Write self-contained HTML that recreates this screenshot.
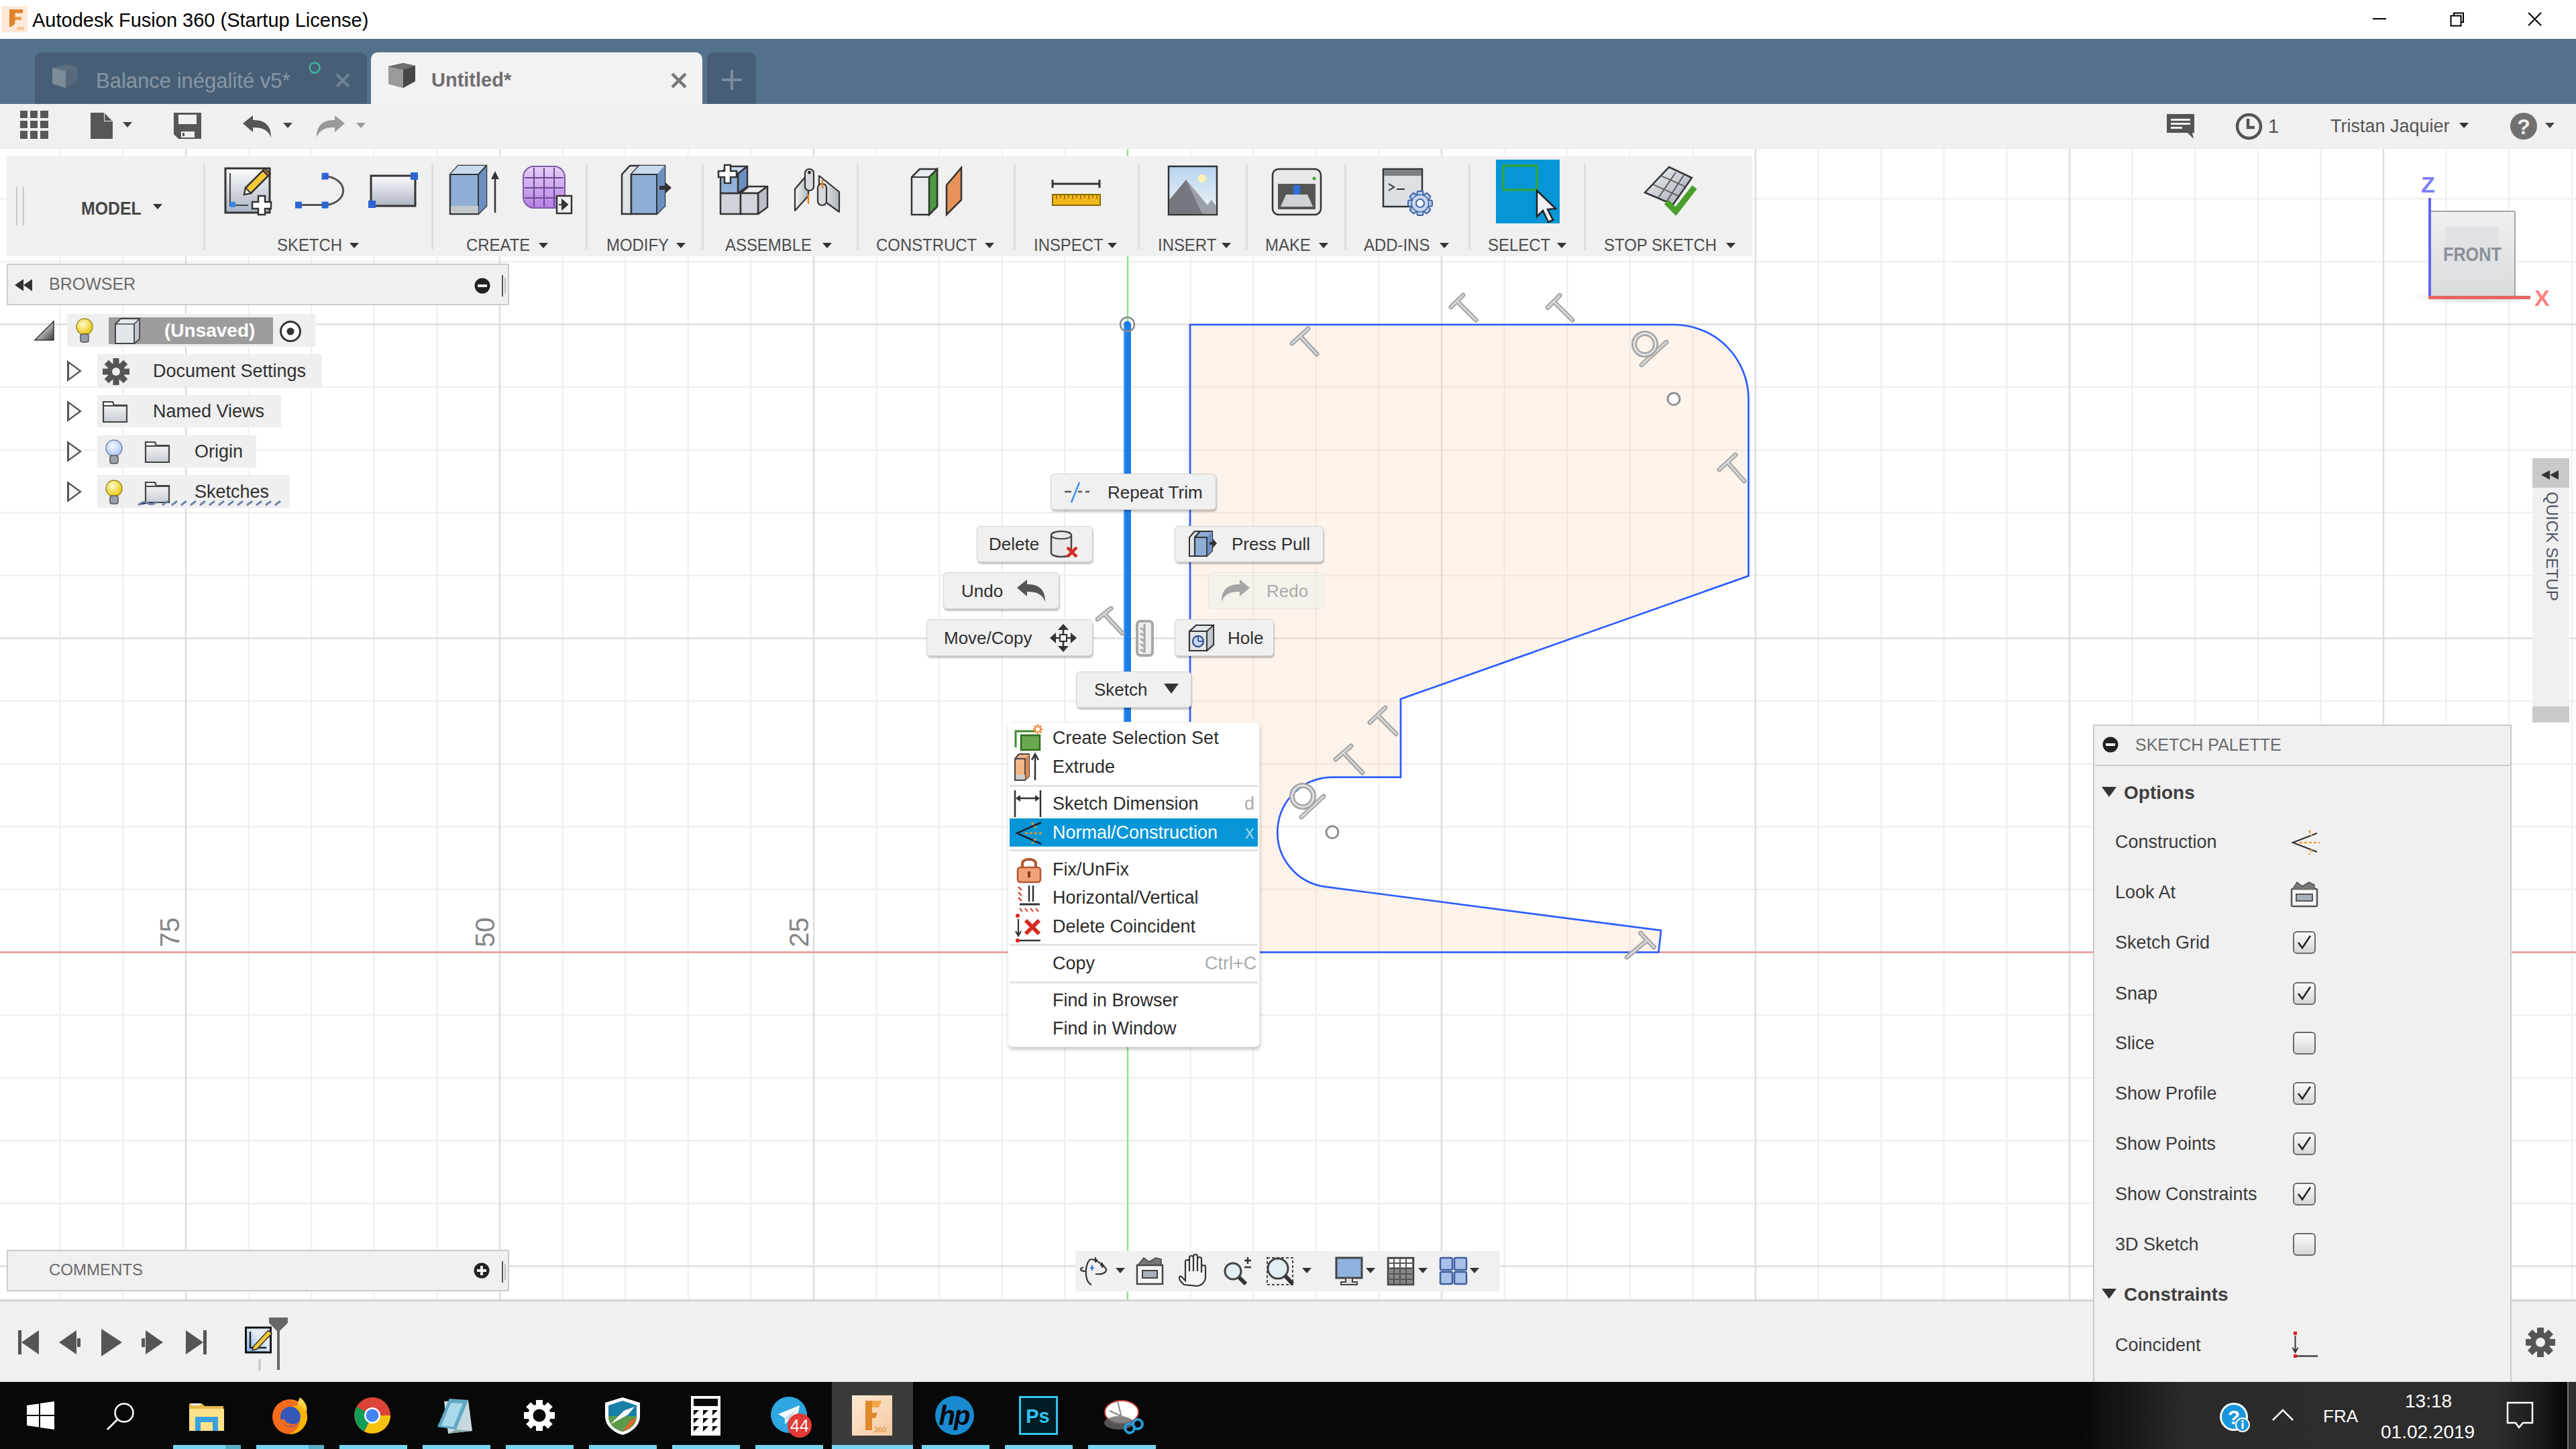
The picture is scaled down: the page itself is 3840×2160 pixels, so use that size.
<!DOCTYPE html>
<html><head><meta charset="utf-8">
<style>
*{margin:0;padding:0;box-sizing:border-box}
html,body{width:3840px;height:2160px;overflow:hidden;background:#fff;font-family:"Liberation Sans",sans-serif;position:relative}
.a{position:absolute}
.t{position:absolute;white-space:nowrap;line-height:1}
svg{position:absolute;overflow:visible}
.lbl{position:absolute;white-space:nowrap;line-height:1;font-size:26px;color:#4d4d4d;top:352px;transform:scaleX(0.92);transform-origin:0 0}
.arr{position:absolute;width:0;height:0;border-left:7px solid transparent;border-right:7px solid transparent;border-top:8px solid #333}
.sep{position:absolute;top:244px;width:3px;height:128px;background:#dedede}
.btn{position:absolute;background:#f0f0f0;border:1px solid #d2d2d2;border-radius:6px;box-shadow:1px 3px 2px rgba(0,0,0,0.22)}
.mt{position:absolute;white-space:nowrap;line-height:1;font-size:26px;color:#2e2e2e}
.ct{position:absolute;white-space:nowrap;line-height:1;font-size:27px;color:#2c2c2c}
.pt{position:absolute;white-space:nowrap;line-height:1;font-size:27px;color:#3a3a3a;left:3153px}
.cb{position:absolute;left:3418px;width:34px;height:34px;border:2px solid #6b6b6b;border-radius:6px;background:linear-gradient(#fafafa,#d6d6d6)}
.tt{position:absolute;white-space:nowrap;line-height:1;font-size:27px;color:#303030}
.tri{position:absolute;width:0;height:0;border-top:16px solid transparent;border-bottom:16px solid transparent;border-left:22px solid #555}
.tri:after{content:"";position:absolute;left:-19px;top:-11px;border-top:11px solid transparent;border-bottom:11px solid transparent;border-left:15px solid #f4f4f4}
.ul{position:absolute;top:2154px;height:6px;width:101px;background:#76d6f2}
</style></head><body>
<!-- TITLE BAR -->
<div class="a" style="left:0;top:0;width:3840px;height:58px;background:#fff"></div>
<svg style="left:2px;top:9px" width="40" height="40"><rect x="0" y="0" width="39" height="39" fill="#fde9d8"/><path d="M12 5 H32 V10.5 H20.5 V16 H30 V21 H20.5 V26 L15 31 H12 Z" fill="#e0832c"/><path d="M20.5 16 H30 V21 H20.5 Z" fill="#e9a050"/><rect x="23" y="31" width="11" height="5" fill="#f6c99a"/></svg>
<div class="t" id="title" style="left:48px;top:16px;font-size:29px;color:#000">Autodesk Fusion 360 (Startup License)</div>
<div class="a" style="left:3537px;top:27px;width:20px;height:2px;background:#000"></div>
<svg style="left:3651px;top:17px" width="24" height="24"><rect x="2.5" y="6.5" width="15" height="15" fill="none" stroke="#000" stroke-width="2"/><path d="M7 6.5 V2.5 H21 V16 H17.5" fill="none" stroke="#000" stroke-width="2"/></svg>
<svg style="left:3768px;top:18px" width="22" height="22"><path d="M1 1 L20 20 M20 1 L1 20" stroke="#000" stroke-width="2"/></svg>
<!-- TAB BAR -->
<div class="a" style="left:0;top:58px;width:3840px;height:97px;background:#54718c"></div>
<div class="a" style="left:52px;top:78px;width:495px;height:77px;background:#465f77;border-radius:10px 10px 0 0"></div>
<svg style="left:76px;top:95px" width="44" height="40"><path d="M2 6 L22 1 L40 5 L40 26 L22 36 L2 30 Z" fill="#5d6f80"/><path d="M2 6 L22 11 L22 36 L2 30 Z" fill="#7d8c99"/><path d="M22 11 L40 5 L40 26 L22 36 Z" fill="#56687a"/></svg>
<div class="t" id="tab1" style="left:143px;top:105px;font-size:31px;color:#8897a6">Balance inégalité v5*</div>
<svg style="left:459px;top:91px" width="20" height="20"><circle cx="10" cy="10" r="7.5" fill="none" stroke="#3fb3a0" stroke-width="2.5"/></svg>
<svg style="left:500px;top:109px" width="22" height="22"><path d="M2 2 L20 20 M20 2 L2 20" stroke="#6f8295" stroke-width="4"/></svg>
<div class="a" style="left:553px;top:78px;width:494px;height:77px;background:#f2f2f3;border-radius:10px 10px 0 0"></div>
<svg style="left:577px;top:93px" width="44" height="42"><path d="M2 6 L24 1 L42 5 L42 28 L24 38 L2 32 Z" fill="#555"/><path d="M2 6 L24 11 L24 38 L2 32 Z" fill="#9a9a9a"/><path d="M24 11 L42 5 L42 28 L24 38 Z" fill="#474747"/><path d="M2 6 L24 1 L42 5 L24 11 Z" fill="#6f6f6f"/></svg>
<div class="t" id="tab2" style="left:643px;top:105px;font-size:29px;font-weight:bold;color:#6e6e6e">Untitled*</div>
<svg style="left:1000px;top:108px" width="24" height="24"><path d="M2 2 L22 22 M22 2 L2 22" stroke="#777" stroke-width="4.5"/></svg>
<div class="a" style="left:1054px;top:78px;width:73px;height:77px;background:#465f77;border-radius:10px 10px 0 0"></div>
<svg style="left:1073px;top:101px" width="36" height="36"><path d="M18 3 V33 M3 18 H33" stroke="#788ba0" stroke-width="4"/></svg>
<!-- TOOLBAR -->
<div class="a" style="left:0;top:155px;width:3840px;height:67px;background:#f0f0f0"></div>
<svg style="left:30px;top:165px" width="43" height="43" fill="#575757"><rect x="0" y="0" width="11" height="11"/><rect x="15" y="0" width="11" height="11"/><rect x="30" y="0" width="12" height="11"/><rect x="0" y="15" width="11" height="11"/><rect x="15" y="15" width="11" height="11"/><rect x="30" y="15" width="12" height="11"/><rect x="0" y="30" width="11" height="12"/><rect x="15" y="30" width="11" height="12"/><rect x="30" y="30" width="12" height="12"/></svg>
<svg style="left:135px;top:168px" width="34" height="40"><path d="M0 0 H20 L33 13 V39 H0 Z" fill="#575757"/><path d="M20 0 V13 H33" fill="#f0f0f0"/><path d="M21 1 L32 12 H21 Z" fill="#575757"/></svg>
<div class="arr" style="left:183px;top:182px;border-top-color:#444"></div>
<svg style="left:259px;top:168px" width="42" height="40"><path d="M0 0 H41 V39 H7 L0 32 Z" fill="#575757"/><rect x="7" y="3" width="27" height="14" fill="#f0f0f0"/><rect x="11" y="28" width="20" height="9" fill="#f0f0f0"/><rect x="13" y="30" width="3" height="5" fill="#575757"/></svg>
<svg style="left:362px;top:172px" width="44" height="34"><path d="M0 12 L15 0 V7 C30 7 42 12 42 33 C38 22 30 18 15 18 V25 Z" fill="#555"/></svg>
<div class="arr" style="left:422px;top:183px;border-top-color:#444"></div>
<svg style="left:472px;top:172px" width="44" height="34"><path d="M42 12 L27 0 V7 C12 7 0 12 0 33 C4 22 12 18 27 18 V25 Z" fill="#9a9a9a"/></svg>
<div class="arr" style="left:531px;top:183px;border-top-color:#999"></div>
<svg style="left:3230px;top:170px" width="42" height="38"><path d="M0 0 H41 V28 H38 L40 37 L31 28 H0 Z" fill="#555"/><rect x="6" y="7" width="29" height="3" fill="#f0f0f0"/><rect x="6" y="13" width="29" height="3" fill="#f0f0f0"/><rect x="6" y="19" width="17" height="3" fill="#f0f0f0"/></svg>
<svg style="left:3332px;top:168px" width="42" height="42"><circle cx="20.5" cy="20.5" r="17.5" fill="none" stroke="#555" stroke-width="4.5"/><path d="M19 9 V22 H29" fill="none" stroke="#555" stroke-width="4.5"/></svg>
<div class="t" id="one" style="left:3381px;top:174px;font-size:29px;color:#555">1</div>
<div class="t" id="user" style="left:3474px;top:175px;font-size:27px;color:#555">Tristan Jaquier</div>
<div class="arr" style="left:3666px;top:183px;border-top-color:#333"></div>
<svg style="left:3742px;top:168px" width="41" height="41"><circle cx="20" cy="20" r="20" fill="#707070"/><text x="20" y="32" font-family="Liberation Sans" font-weight="bold" font-size="32" fill="#f0f0f0" text-anchor="middle">?</text></svg>
<div class="arr" style="left:3794px;top:183px;border-top-color:#444"></div>
<!-- VIEWPORT -->
<svg style="left:0;top:222px" width="3840" height="1715" viewBox="0 0 3840 1715">
<path d="M89.8 0V1715M183.4 0V1715M370.6 0V1715M464.2 0V1715M557.8 0V1715M651.4 0V1715M838.6 0V1715M932.2 0V1715M1025.8 0V1715M1119.4 0V1715M1306.6 0V1715M1400.2 0V1715M1493.8 0V1715M1587.4 0V1715M1774.6 0V1715M1868.2 0V1715M1961.8 0V1715M2055.4 0V1715M2242.6 0V1715M2336.2 0V1715M2429.8 0V1715M2523.4 0V1715M2710.6 0V1715M2804.2 0V1715M2897.8 0V1715M2991.4 0V1715M3178.6 0V1715M3272.2 0V1715M3365.8 0V1715M3459.4 0V1715M3646.6 0V1715M3740.2 0V1715M3833.8 0V1715M0 74.3H3840M0 167.9H3840M0 355.1H3840M0 448.7H3840M0 542.3H3840M0 635.9H3840M0 823.1H3840M0 916.7H3840M0 1010.3H3840M0 1103.9H3840M0 1291.1H3840M0 1384.7H3840M0 1478.3H3840M0 1571.9H3840" stroke="#f0f0f0" stroke-width="2.5" fill="none"/>
<path d="M277.0 0V1715M745.0 0V1715M1213.0 0V1715M1681.0 0V1715M2149.0 0V1715M2617.0 0V1715M3085.0 0V1715M3553.0 0V1715M0 261.5H3840M0 729.5H3840M0 1197.5H3840M0 1665.5H3840" stroke="#dedede" stroke-width="2.5" fill="none"/>
<path d="M1774.0 262.0 L2495.0 262.0 A111 111 0 0 1 2606.5 373.0 L2606.5 636.5 L2088.0 820.0 L2088.0 936.6 L1986.0 936.6 A82 82 0 0 0 1975.6 1099.9 L2476.0 1165.0 L2472.5 1197.5 L1774.0 1197.5 Z" fill="#f7d3b0" fill-opacity="0.27" stroke="none"/>
<path d="M0 1197.5H3840" stroke="#ec9898" stroke-width="2.5"/>
<path d="M1681.0 0V1715" stroke="#8ee08e" stroke-width="2.2"/>
<path d="M1774.0 262.0 L2495.0 262.0 A111 111 0 0 1 2606.5 373.0 L2606.5 636.5 L2088.0 820.0 L2088.0 936.6 L1986.0 936.6 A82 82 0 0 0 1975.6 1099.9 L2476.0 1165.0 L2472.5 1197.5 L1774.0 1197.5 Z" fill="none" stroke="#2a5dff" stroke-width="2.7" stroke-linejoin="miter"/>
<path d="M1680.5 262V853" stroke="#1a7ee6" stroke-width="11" stroke-linecap="round"/>
<path d="M1676.0 262V853" stroke="#5aa8ff" stroke-width="2" opacity="0.7"/>
<circle cx="1680.5" cy="261.5" r="10.5" fill="none" stroke="#8a8a8a" stroke-width="2.5"/>
<circle cx="2495" cy="372.70000000000005" r="9" fill="#fff" stroke="#8f8f8f" stroke-width="3"/>
<circle cx="1986" cy="1018.5999999999999" r="9" fill="#fff" stroke="#8f8f8f" stroke-width="3"/>
</svg>
<div class="a" style="left:0;top:1937px;width:3840px;height:3px;background:#d4d4d4"></div>
<!-- CONSTRAINT GLYPHS -->
<svg style="left:0;top:0" width="3840" height="2160">
<g stroke="#a8a8a8" stroke-width="7" stroke-linecap="round" fill="none">
<path d="M2163 457.6 L2181 440 M2172 449 L2200 477"/>
<path d="M2307 458.5 L2325 440.5 M2316 449.5 L2344 477"/>
<path d="M1926 512 L1950 490 M1938 501 L1963 528"/>
<path d="M2563 700 L2587 678 M2575 689 L2600 717"/>
<path d="M2042 1077 L2065 1055 M2053.5 1066 L2081 1094"/>
<path d="M1991 1132 L2014 1112 M2002.5 1122 L2031 1152"/>
<path d="M2445.5 1391 L2465.5 1412 M2455.5 1401.5 L2425 1427"/>
<path d="M1636 923 L1656 907 M1646 915 L1673 944"/>
<path d="M2447 544 L2484 510"/>
<path d="M1940 1218 L1973 1187"/>
</g>
<g stroke="#e6e6e6" stroke-width="2.5" stroke-linecap="round" fill="none" opacity="0.8">
<path d="M2163 457.6 L2181 440 M2172 449 L2200 477"/>
<path d="M2307 458.5 L2325 440.5 M2316 449.5 L2344 477"/>
<path d="M1926 512 L1950 490 M1938 501 L1963 528"/>
<path d="M2563 700 L2587 678 M2575 689 L2600 717"/>
<path d="M2042 1077 L2065 1055 M2053.5 1066 L2081 1094"/>
<path d="M1991 1132 L2014 1112 M2002.5 1122 L2031 1152"/>
<path d="M2445.5 1391 L2465.5 1412 M2455.5 1401.5 L2425 1427"/>
<path d="M1636 923 L1656 907 M1646 915 L1673 944"/>
<path d="M2447 544 L2484 510"/>
<path d="M1940 1218 L1973 1187"/>
</g>
<circle cx="2452" cy="513" r="16" fill="none" stroke="#a4a4a4" stroke-width="8"/><circle cx="2452" cy="513" r="16" fill="none" stroke="#e2e2e2" stroke-width="3"/>
<circle cx="1942" cy="1187" r="16" fill="none" stroke="#a4a4a4" stroke-width="8"/><circle cx="1942" cy="1187" r="16" fill="none" stroke="#e2e2e2" stroke-width="3"/>
<rect x="1695" y="926" width="23" height="51" rx="5" fill="#efefef" stroke="#a8a8a8" stroke-width="4"/><path d="M1706 930 V973 M1700 936 l6 4 M1700 944 l6 4 M1700 952 l6 4 M1700 960 l6 4 M1700 968 l6 4" stroke="#a8a8a8" stroke-width="3"/>
</svg>
<!-- MARKING MENU -->
<div class="btn" style="left:1566px;top:706px;width:247px;height:54px"></div>
<svg style="left:1585px;top:715px" width="46" height="36"><path d="M2 18 H12 M22 18 H28 M33 18 H39" stroke="#555" stroke-width="2.5"/><path d="M12 34 L24 4" stroke="#3d8ef0" stroke-width="2.5"/></svg>
<div class="mt" id="m_rt" style="left:1651px;top:721px">Repeat Trim</div>
<div class="btn" style="left:1456px;top:784px;width:173px;height:54px"></div>
<div class="mt" id="m_del" style="left:1474px;top:798px">Delete</div>
<svg style="left:1563px;top:790px" width="46" height="42"><path d="M4 8 C4 0 34 0 34 8 V34 C34 42 4 42 4 34 Z" fill="#e8e8ea" stroke="#444" stroke-width="2.5"/><path d="M4 8 C4 15 34 15 34 8" fill="none" stroke="#444" stroke-width="2"/><path d="M28 26 L42 40 M42 26 L28 40" stroke="#d42a1e" stroke-width="4.5"/></svg>
<div class="btn" style="left:1751px;top:784px;width:222px;height:54px"></div>
<svg style="left:1771px;top:789px" width="44" height="44"><path d="M2 12 L10 3 H18 L10 12 V40 H2 Z" fill="#dfe3ea" stroke="#333" stroke-width="2"/><path d="M10 12 L18 3 H36 V32 L28 40 H10 Z" fill="#8faed6" stroke="#333" stroke-width="2.2"/><path d="M28 12 L36 3 V32 L28 40 Z" fill="#6c8fc2"/><path d="M10 12 H28 V40" fill="none" stroke="#333" stroke-width="1.8"/><path d="M32 19 H37 V14 L43 21 L37 28 V23 H32 Z" fill="#333"/></svg>
<div class="mt" id="m_pp" style="left:1836px;top:798px">Press Pull</div>
<div class="btn" style="left:1406px;top:853px;width:173px;height:55px"></div>
<div class="mt" id="m_undo" style="left:1433px;top:868px">Undo</div>
<svg style="left:1516px;top:864px" width="44" height="34"><path d="M0 12 L15 0 V7 C30 7 42 12 42 33 C38 22 30 18 15 18 V25 Z" fill="#555"/></svg>
<div class="btn" style="left:1801px;top:853px;width:173px;height:55px;opacity:0.45;box-shadow:none"></div>
<svg style="left:1821px;top:864px" width="44" height="34"><path d="M42 12 L27 0 V7 C12 7 0 12 0 33 C4 22 12 18 27 18 V25 Z" fill="#a5a5a5"/></svg>
<div class="mt" id="m_redo" style="left:1888px;top:868px;color:#ababab">Redo</div>
<div class="btn" style="left:1381px;top:923px;width:248px;height:55px"></div>
<div class="mt" id="m_mc" style="left:1407px;top:938px">Move/Copy</div>
<svg style="left:1563px;top:928px" width="44" height="46"><path d="M22 2 L14 11 H30 Z M22 44 L14 35 H30 Z M2 23 L11 15 V31 Z M42 23 L33 15 V31 Z" fill="#333"/><path d="M22 10 V36 M10 23 H34" stroke="#333" stroke-width="2.5"/><rect x="17" y="18" width="10" height="10" fill="#f0f0f0" stroke="#333" stroke-width="2"/></svg>
<div class="btn" style="left:1751px;top:923px;width:148px;height:55px"></div>
<svg style="left:1771px;top:929px" width="44" height="44"><path d="M2 12 L12 3 H38 V32 L28 41 H2 Z" fill="#e1e4e9" stroke="#333" stroke-width="2.2"/><path d="M28 12 L38 3 V32 L28 41 Z" fill="#c3c8cf" stroke="#333" stroke-width="1.8"/><path d="M2 12 H28 V41" fill="none" stroke="#333" stroke-width="1.8"/><circle cx="15" cy="27" r="8" fill="#c9daf2" stroke="#3a5a9a" stroke-width="2.5"/><path d="M15 27 V19 M15 27 H23" stroke="#3a5a9a" stroke-width="2"/></svg>
<div class="mt" id="m_hole" style="left:1830px;top:938px">Hole</div>
<div class="btn" style="left:1604px;top:1001px;width:172px;height:54px"></div>
<div class="mt" id="m_sk" style="left:1631px;top:1015px">Sketch</div>
<div class="a" style="left:1735px;top:1019px;width:0;height:0;border-left:11px solid transparent;border-right:11px solid transparent;border-top:15px solid #333"></div>
<!-- RIBBON -->
<div class="a" style="left:10px;top:233px;width:2602px;height:149px;background:#f0f0f0"></div>
<div class="a" style="left:24px;top:278px;width:2px;height:58px;background:#c9c9c9"></div>
<div class="a" style="left:34px;top:278px;width:2px;height:58px;background:#c9c9c9"></div>
<div class="t" id="model" style="left:121px;top:298px;font-size:27px;transform:scaleX(0.92);transform-origin:0 0;font-weight:bold;color:#464646">MODEL</div>
<div class="arr" style="left:228px;top:304px;border-top-color:#333"></div>
<div class="sep" style="left:303px"></div>
<div class="sep" style="left:643px"></div>
<div class="sep" style="left:873px"></div>
<div class="sep" style="left:1046px"></div>
<div class="sep" style="left:1277px"></div>
<div class="sep" style="left:1511px"></div>
<div class="sep" style="left:1696px"></div>
<div class="sep" style="left:1857px"></div>
<div class="sep" style="left:2004px"></div>
<div class="sep" style="left:2189px"></div>
<div class="sep" style="left:2361px"></div>
<div class="lbl" id="l_sketch" style="left:413px">SKETCH</div><div class="arr" style="left:521px;top:362px"></div>
<div class="lbl" id="l_create" style="left:695px">CREATE</div><div class="arr" style="left:803px;top:362px"></div>
<div class="lbl" id="l_modify" style="left:904px">MODIFY</div><div class="arr" style="left:1008px;top:362px"></div>
<div class="lbl" id="l_assemble" style="left:1081px">ASSEMBLE</div><div class="arr" style="left:1226px;top:362px"></div>
<div class="lbl" id="l_construct" style="left:1306px">CONSTRUCT</div><div class="arr" style="left:1468px;top:362px"></div>
<div class="lbl" id="l_inspect" style="left:1541px">INSPECT</div><div class="arr" style="left:1651px;top:362px"></div>
<div class="lbl" id="l_insert" style="left:1726px">INSERT</div><div class="arr" style="left:1821px;top:362px"></div>
<div class="lbl" id="l_make" style="left:1886px">MAKE</div><div class="arr" style="left:1966px;top:362px"></div>
<div class="lbl" id="l_addins" style="left:2033px">ADD-INS</div><div class="arr" style="left:2146px;top:362px"></div>
<div class="lbl" id="l_select" style="left:2218px">SELECT</div><div class="arr" style="left:2321px;top:362px"></div>
<div class="lbl" id="l_stop" style="left:2391px">STOP SKETCH</div><div class="arr" style="left:2573px;top:362px"></div>
<!-- ribbon icons -->
<svg style="left:334px;top:248px" width="76" height="76"><defs><linearGradient id="gsk" x1="0" y1="0" x2="0" y2="1"><stop offset="0" stop-color="#fdfdfd"/><stop offset="1" stop-color="#aab2c2"/></linearGradient></defs>
<rect x="2" y="3" width="66" height="66" fill="url(#gsk)" stroke="#333" stroke-width="3"/><path d="M9 10 V58 H36" fill="none" stroke="#444" stroke-width="2"/><rect x="9" y="53" width="8" height="8" fill="#3d86e8"/>
<path d="M32 32 L58 6 L66 14 L40 40 L30 42 Z" fill="#f6c936" stroke="#333" stroke-width="2.5"/><path d="M58 6 L61 3 L69 11 L66 14 Z" fill="#c7733a" stroke="#333" stroke-width="2"/><path d="M32 32 L40 40 L30 42 Z" fill="#fff" stroke="#333" stroke-width="2"/>
<path d="M51 44 H61 V53 H70 V63 H61 V72 H51 V63 H42 V53 H51 Z" fill="#fff" stroke="#333" stroke-width="2.5"/></svg>
<svg style="left:440px;top:256px" width="80" height="62"><path d="M5 49.6 H44.6" stroke="#555" stroke-width="3"/><path d="M44.6 6.7 A29 21.5 0 0 1 44.6 49.6" fill="none" stroke="#555" stroke-width="3"/><rect x="0" y="44.6" width="10" height="10" fill="#2d64d2"/><rect x="39.6" y="44.6" width="10" height="10" fill="#2d64d2"/><rect x="39.6" y="1.7" width="10" height="10" fill="#2d64d2"/></svg>
<svg style="left:549px;top:257px" width="76" height="56"><defs><linearGradient id="grc" x1="0" y1="0" x2="0" y2="1"><stop offset="0" stop-color="#fbfbfd"/><stop offset="1" stop-color="#aeb5c4"/></linearGradient></defs><rect x="4" y="5" width="66" height="45" fill="url(#grc)" stroke="#333" stroke-width="3"/><rect x="0" y="42" width="11" height="11" fill="#2d64d2"/><rect x="63" y="0" width="11" height="11" fill="#2d64d2"/></svg>
<svg style="left:669px;top:245px" width="78" height="76"><path d="M2 15 L14 2 H56 V62 L44 74 H2 Z" fill="#8faed6" stroke="#333" stroke-width="2.5"/><path d="M2 15 L14 2 H56 L44 15 Z" fill="#c8daf0"/><path d="M44 15 L56 2 V62 L44 74 Z" fill="#6c8fc2"/><path d="M2 15 H44 V74 M44 15 L56 2" fill="none" stroke="#333" stroke-width="2"/><rect x="3" y="62" width="41" height="11" fill="#c4c7cc"/><path d="M69 72 V18" stroke="#333" stroke-width="2.5"/><path d="M63 22 L69 10 L75 22 Z" fill="#333"/></svg>
<svg style="left:778px;top:245px" width="76" height="76"><defs><linearGradient id="gfm" x1="0" y1="0" x2="0" y2="1"><stop offset="0" stop-color="#e7cff7"/><stop offset="1" stop-color="#b57fe6"/></linearGradient></defs><rect x="2" y="3" width="62" height="62" rx="16" fill="url(#gfm)" stroke="#7d5aa6" stroke-width="2"/><path d="M18 5 V63 M33 5 V63 M48 5 V63 M4 20 H62 M4 35 H62 M4 50 H62" stroke="#6b4a90" stroke-width="2"/><rect x="52" y="47" width="22" height="26" fill="#f0f0f0" stroke="#333" stroke-width="2.5"/><path d="M55 60 H64 M60 53 L68 60 L60 67 Z" fill="#333" stroke="#333" stroke-width="2"/></svg>
<svg style="left:925px;top:245px" width="78" height="76"><path d="M2 15 L14 2 H28 L16 15 V74 H2 Z" fill="#dfe3ea" stroke="#333" stroke-width="2.5"/><path d="M16 15 L28 2 H66 V62 L54 74 H16 Z" fill="#8faed6" stroke="#333" stroke-width="2.5"/><path d="M16 15 L28 2 H66 L54 15 Z" fill="#c8daf0"/><path d="M54 15 L66 2 V62 L54 74 Z" fill="#6c8fc2"/><path d="M16 15 H54 V74" fill="none" stroke="#333" stroke-width="2"/><path d="M58 32 H66 V26 L76 35 L66 44 V38 H58 Z" fill="#333"/></svg>
<svg style="left:1071px;top:245px" width="78" height="78"><g stroke="#333" stroke-width="2.5" stroke-linejoin="round"><path d="M33 43 L45 33 H73 L59 43 Z" fill="#eceef1"/><path d="M59 43 L73 33 V64 L59 74 Z" fill="#b9bec6"/><rect x="3" y="43" width="30" height="31" fill="#cfd3da"/><rect x="33" y="43" width="26" height="31" fill="#d3d6dc"/><path d="M3 14 L13 3 H43 L29 14 Z" fill="#c8daf0"/><path d="M29 14 L43 3 V33 L29 43 Z" fill="#6c8fc2"/><rect x="3" y="14" width="26" height="29" fill="#93b2da"/></g><path d="M9 1 H18 V10 H27 V19 H18 V28 H9 V19 H0 V10 H9 Z" fill="#fff" stroke="#333" stroke-width="2.5"/></svg>
<svg style="left:1183px;top:250px" width="72" height="70"><defs><linearGradient id="gjt" x1="0" y1="0" x2="1" y2="0"><stop offset="0" stop-color="#f4f5f7"/><stop offset="1" stop-color="#aeb3bb"/></linearGradient></defs><g stroke="#333" stroke-width="2.2" stroke-linejoin="round"><path d="M2 64 V32 L22 8 V42 Z" fill="url(#gjt)"/><rect x="17" y="2" width="13" height="32" rx="6" fill="#d6d9de"/><path d="M38 12 L68 36 V66 L38 44 Z" fill="url(#gjt)"/><rect x="36" y="24" width="13" height="32" rx="6" fill="#d6d9de"/></g><circle cx="23.5" cy="7" r="2.5" fill="#333"/><path d="M22 40 V54 M43 18 V31" stroke="#f07d1a" stroke-width="2.5"/></svg>
<svg style="left:1357px;top:248px" width="80" height="74"><path d="M2 16 L14 4 H40 V60 L28 72 H2 Z" fill="#e8ebef" stroke="#333" stroke-width="2.5"/><path d="M28 16 L40 4 V60 L28 72 Z" fill="#4e9a3e" stroke="#333" stroke-width="2.5"/><path d="M2 16 H28 V72" fill="none" stroke="#333" stroke-width="2"/><path d="M54 28 L76 2 V50 L54 72 Z" fill="#e8925a" stroke="#333" stroke-width="2.5"/></svg>
<svg style="left:1567px;top:264px" width="76" height="44"><path d="M2 4 V16 M2 10 H72 M72 4 V16" stroke="#333" stroke-width="3"/><rect x="2" y="26" width="71" height="16" fill="#f2b81e" stroke="#8a6a00" stroke-width="2"/><path d="M8 27 V33 M14 27 V31 M20 27 V33 M26 27 V31 M32 27 V33 M38 27 V31 M44 27 V33 M50 27 V31 M56 27 V33 M62 27 V31 M68 27 V33" stroke="#8a6a00" stroke-width="1.5"/></svg>
<svg style="left:1740px;top:246px" width="78" height="76"><defs><linearGradient id="gim" x1="0" y1="0" x2="0" y2="1"><stop offset="0" stop-color="#b7d4ee"/><stop offset="1" stop-color="#f2f5f8"/></linearGradient></defs><rect x="2" y="2" width="72" height="72" fill="url(#gim)" stroke="#333" stroke-width="2.5"/><circle cx="52" cy="20" r="6" fill="#fff3b0"/><path d="M3 73 V52 L28 22 L60 60 L66 52 L73 62 V73 Z" fill="#74787e"/><path d="M28 22 L52 73 H73 V62 L66 52 L60 60 Z" fill="#9aa0a6"/></svg>
<svg style="left:1895px;top:250px" width="76" height="72"><rect x="2" y="2" width="72" height="68" rx="9" fill="#e9e9e9" stroke="#333" stroke-width="2.5"/><rect x="10" y="24" width="56" height="38" fill="#555"/><path d="M14 58 L22 40 H54 L62 58 Z" fill="#cfd3d8"/><rect x="33" y="26" width="10" height="14" fill="#2d6fd6"/><circle cx="64" cy="16" r="2.5" fill="#3fa33a"/></svg>
<svg style="left:2060px;top:250px" width="78" height="74"><rect x="2" y="2" width="58" height="56" fill="#dcdfe4" stroke="#333" stroke-width="2.5"/><rect x="3" y="3" width="56" height="9" fill="#7c8086"/><path d="M10 24 L18 29 L10 34 M22 32 H34" fill="none" stroke="#333" stroke-width="2"/><g transform="translate(57 53)"><g fill="#b9cdea" stroke="#3f64a8" stroke-width="2"><rect x="-4.5" y="-18" width="9" height="9" rx="2" transform="rotate(0)"/><rect x="-4.5" y="-18" width="9" height="9" rx="2" transform="rotate(45)"/><rect x="-4.5" y="-18" width="9" height="9" rx="2" transform="rotate(90)"/><rect x="-4.5" y="-18" width="9" height="9" rx="2" transform="rotate(135)"/><rect x="-4.5" y="-18" width="9" height="9" rx="2" transform="rotate(180)"/><rect x="-4.5" y="-18" width="9" height="9" rx="2" transform="rotate(225)"/><rect x="-4.5" y="-18" width="9" height="9" rx="2" transform="rotate(270)"/><rect x="-4.5" y="-18" width="9" height="9" rx="2" transform="rotate(315)"/><circle r="12.5"/></g><circle r="12" fill="#c5d6ee"/><circle r="6" fill="#fff" stroke="#3f64a8" stroke-width="2"/></g></svg>
<div class="a" style="left:2230px;top:238px;width:95px;height:95px;background:#0696d7"></div>
<svg style="left:2230px;top:238px" width="95" height="95"><rect x="11" y="9" width="50" height="36" fill="none" stroke="#3aa52a" stroke-width="3"/><path d="M61 46 L61 85 L70 76 L78 93 L85 90 L77 74 L89 73 Z" fill="#eef0f4" stroke="#222" stroke-width="2.5"/></svg>
<svg style="left:2450px;top:247px" width="80" height="76"><defs><linearGradient id="gss" x1="0" y1="0" x2="1" y2="1"><stop offset="0" stop-color="#f5f6f8"/><stop offset="1" stop-color="#9ea5b0"/></linearGradient></defs><path d="M2 40 L38 2 L72 18 L44 58 Z" fill="url(#gss)" stroke="#333" stroke-width="2.5"/><path d="M14 28 L52 45 M26 15 L62 31 M22 48 L48 10 M34 54 L60 14" stroke="#555" stroke-width="1.8"/><path d="M34 54 L48 68 L76 32" fill="none" stroke="#4aa02a" stroke-width="9"/></svg>
<!-- BROWSER -->
<div class="a" style="left:10px;top:393px;width:749px;height:62px;background:#f0f0f0;border:2px solid #cbcbcb"></div>
<svg style="left:22px;top:415px" width="28" height="20"><path d="M0 10 L13 1 V19 Z M13 10 L26 1 V19 Z" fill="#333"/></svg>
<div class="t" id="browser" style="left:73px;top:411px;font-size:25px;color:#6a6a6a">BROWSER</div>
<svg style="left:707px;top:414px" width="24" height="24"><circle cx="12" cy="12" r="11.5" fill="#222"/><rect x="5" y="10" width="14" height="4" fill="#f0f0f0"/></svg>
<div class="a" style="left:748px;top:410px;width:2px;height:32px;background:#555"></div><div class="a" style="left:752px;top:414px;width:2px;height:24px;background:#bbb"></div>
<!-- tree -->
<svg style="left:51px;top:478px" width="30" height="30"><defs><linearGradient id="gtri" x1="0" y1="0" x2="1" y2="1"><stop offset="0.3" stop-color="#e8e8e8"/><stop offset="1" stop-color="#3a3a3a"/></linearGradient></defs><path d="M1 29 L29 1 V29 Z" fill="url(#gtri)" stroke="#333" stroke-width="1.5"/></svg>
<div class="a" style="left:100px;top:468px;width:370px;height:49px;background:#efefef"></div>
<svg style="left:112px;top:474px" width="30" height="40"><defs><radialGradient id="gbulb" cx="0.4" cy="0.35" r="0.7"><stop offset="0" stop-color="#fffbd0"/><stop offset="1" stop-color="#e8c400"/></radialGradient></defs><circle cx="14" cy="13" r="12" fill="url(#gbulb)" stroke="#9a8a20" stroke-width="1.5"/><rect x="8" y="24" width="12" height="12" rx="3" fill="#9aa1ab" stroke="#555" stroke-width="1.5"/></svg>
<div class="a" style="left:162px;top:473px;width:245px;height:40px;background:#9c9c9c"></div>
<svg style="left:170px;top:473px" width="42" height="40"><path d="M2 10 L10 2 H38 V32 L30 39 H2 Z" fill="#e3e6ea" stroke="#444" stroke-width="2"/><path d="M30 10 L38 2 V32 L30 39 Z" fill="#c1c6cd" stroke="#444" stroke-width="1.5"/><path d="M2 10 H30 V39" fill="none" stroke="#444" stroke-width="1.5"/></svg>
<div class="t" id="unsaved" style="left:245px;top:479px;font-size:28px;font-weight:bold;color:#fff">(Unsaved)</div>
<svg style="left:416px;top:477px" width="34" height="34"><circle cx="17" cy="17" r="14.5" fill="#fff" stroke="#333" stroke-width="3"/><circle cx="17" cy="17" r="5.5" fill="#333"/></svg>
<div class="tri" style="left:100px;top:537px"></div>
<div class="a" style="left:145px;top:528px;width:335px;height:48px;background:#efefef"></div>
<svg style="left:152px;top:533px" width="42" height="42"><g transform="translate(21 21)" fill="#555"><circle r="13"/><g id="gt"><rect x="-4.5" y="-20" width="9" height="9"/></g><use href="#gt" transform="rotate(45)"/><use href="#gt" transform="rotate(90)"/><use href="#gt" transform="rotate(135)"/><use href="#gt" transform="rotate(180)"/><use href="#gt" transform="rotate(225)"/><use href="#gt" transform="rotate(270)"/><use href="#gt" transform="rotate(315)"/><circle r="6" fill="#efefef"/></g></svg>
<div class="tt" id="docset" style="left:228px;top:540px">Document Settings</div>
<div class="tri" style="left:100px;top:597px"></div>
<div class="a" style="left:145px;top:589px;width:274px;height:48px;background:#efefef"></div>
<svg style="left:152px;top:597px" width="40" height="34"><defs><linearGradient id="gfd" x1="0" y1="0" x2="0" y2="1"><stop offset="0" stop-color="#fbfbfc"/><stop offset="1" stop-color="#c8ccd4"/></linearGradient></defs><path d="M2 2 H16 L18 7 H37 V32 H2 Z" fill="url(#gfd)" stroke="#444" stroke-width="2.2"/><path d="M2 8 H37" stroke="#444" stroke-width="1.8"/></svg>
<div class="tt" id="named" style="left:228px;top:600px">Named Views</div>
<div class="tri" style="left:100px;top:657px"></div>
<div class="a" style="left:145px;top:649px;width:237px;height:48px;background:#efefef"></div>
<svg style="left:157px;top:655px" width="30" height="40"><defs><radialGradient id="gbb" cx="0.4" cy="0.35" r="0.7"><stop offset="0" stop-color="#f4f8ff"/><stop offset="1" stop-color="#a8c3f0"/></radialGradient></defs><circle cx="13" cy="13" r="12" fill="url(#gbb)" stroke="#6d86b8" stroke-width="1.5"/><rect x="7" y="24" width="12" height="12" rx="3" fill="#9aa1ab" stroke="#555" stroke-width="1.5"/></svg>
<svg style="left:215px;top:657px" width="40" height="34"><path d="M2 2 H16 L18 7 H37 V32 H2 Z" fill="url(#gfd)" stroke="#444" stroke-width="2.2"/><path d="M2 8 H37" stroke="#444" stroke-width="1.8"/></svg>
<div class="tt" id="origin" style="left:290px;top:660px">Origin</div>
<div class="tri" style="left:100px;top:717px"></div>
<div class="a" style="left:145px;top:708px;width:287px;height:49px;background:#efefef"></div>
<svg style="left:157px;top:715px" width="30" height="40"><circle cx="13" cy="13" r="12" fill="url(#gbulb)" stroke="#9a8a20" stroke-width="1.5"/><rect x="7" y="24" width="12" height="12" rx="3" fill="#9aa1ab" stroke="#555" stroke-width="1.5"/></svg>
<svg style="left:215px;top:717px" width="40" height="34"><path d="M2 2 H16 L18 7 H37 V32 H2 Z" fill="url(#gfd)" stroke="#444" stroke-width="2.2"/><path d="M2 8 H37" stroke="#444" stroke-width="1.8"/></svg>
<div class="tt" id="sketches" style="left:290px;top:720px">Sketches</div>
<svg style="left:206px;top:744px" width="222" height="12"><path d="M0 9 Q8 2 14 6 Q20 10 28 4 M36 9 L44 3 M50 9 L58 3 M64 9 L72 3 M78 9 L86 3 M92 9 L100 3 M106 9 L114 3 M120 9 L128 3 M134 9 L142 3 M148 9 L156 3 M162 9 L170 3 M176 9 L184 3 M190 9 L198 3 M204 9 L212 3" stroke="#6d83a8" stroke-width="3"/></svg>
<!-- COMMENTS -->
<div class="a" style="left:10px;top:1863px;width:749px;height:62px;background:#f0f0f0;border:2px solid #cbcbcb"></div>
<div class="t" id="comments" style="left:73px;top:1881px;font-size:24px;color:#6a6a6a">COMMENTS</div>
<svg style="left:706px;top:1882px" width="24" height="24"><circle cx="12" cy="12" r="11.5" fill="#222"/><rect x="5" y="10" width="14" height="4" fill="#f0f0f0"/><rect x="10" y="5" width="4" height="14" fill="#f0f0f0"/></svg>
<div class="a" style="left:748px;top:1880px;width:2px;height:32px;background:#555"></div><div class="a" style="left:752px;top:1884px;width:2px;height:24px;background:#bbb"></div>
<!-- TIMELINE -->
<div class="a" style="left:0;top:1940px;width:3840px;height:120px;background:#f0f0f0"></div>
<svg style="left:26px;top:1981px" width="290" height="42" fill="#555"><rect x="1" y="2" width="5" height="36"/><path d="M32 2 V38 L6 20 Z"/><path d="M62 20 L88 2 V38 Z"/><rect x="89" y="14" width="5" height="13"/><path d="M125 0 L156 20 L125 41 Z"/><rect x="185" y="14" width="5" height="13"/><path d="M191 2 L217 20 L191 38 Z"/><path d="M251 2 L277 20 L251 38 Z"/><rect x="277" y="2" width="5" height="36"/></svg>
<svg style="left:364px;top:1962px" width="70" height="84"><defs><linearGradient id="gtl" x1="0" y1="1" x2="1" y2="0"><stop offset="0" stop-color="#7fb2ea"/><stop offset="0.6" stop-color="#e4ecf5"/></linearGradient></defs><rect x="2.5" y="17" width="37" height="37" fill="url(#gtl)" stroke="#111" stroke-width="3"/><path d="M9 23 V47 H33" fill="none" stroke="#222" stroke-width="2.5"/><path d="M14 45 L36 21 L41 26 L19 49 L12 51 Z" fill="#f6c936" stroke="#333" stroke-width="1.5"/><path d="M37 2 H65 V10 L53 22 V80 H49 V22 L37 10 Z" fill="#666"/><rect x="21" y="64" width="4" height="17" fill="#ccc"/></svg>
<svg style="left:3764px;top:1978px" width="46" height="46"><g transform="translate(23 23)" fill="#555"><circle r="15"/><rect x="-5" y="-22" width="10" height="10"/><rect x="-5" y="-22" width="10" height="10" transform="rotate(45)"/><rect x="-5" y="-22" width="10" height="10" transform="rotate(90)"/><rect x="-5" y="-22" width="10" height="10" transform="rotate(135)"/><rect x="-5" y="-22" width="10" height="10" transform="rotate(180)"/><rect x="-5" y="-22" width="10" height="10" transform="rotate(225)"/><rect x="-5" y="-22" width="10" height="10" transform="rotate(270)"/><rect x="-5" y="-22" width="10" height="10" transform="rotate(315)"/><circle r="7" fill="#f0f0f0"/></g></svg>
<!-- VIEW CUBE -->
<div class="a" style="left:3590px;top:432px;width:200px;height:22px;background:radial-gradient(ellipse at center,rgba(0,0,0,0.18),rgba(0,0,0,0) 70%)"></div>
<div class="a" style="left:3622px;top:314px;width:128px;height:129px;background:linear-gradient(#f0f0f1,#dadadb);border:2px solid #a5a5a5;border-radius:3px"></div>
<div class="a" style="left:3645px;top:338px;width:80px;height:78px;background:#dfe1e4"></div>
<div class="t" style="left:3642px;top:364px;font-size:30px;font-weight:bold;color:#8b9097;transform:scaleX(0.84);transform-origin:0 0">FRONT</div>
<div class="a" style="left:3620px;top:295px;width:4px;height:150px;background:#6464f0"></div>
<div class="a" style="left:3620px;top:441px;width:152px;height:5px;background:#e86464"></div>
<div class="t" style="left:3609px;top:258px;font-size:34px;font-weight:bold;color:#7e7ef8">Z</div>
<div class="t" style="left:3778px;top:427px;font-size:34px;font-weight:bold;color:#ff8080">X</div>
<!-- QUICK SETUP -->
<div class="a" style="left:3775px;top:683px;width:55px;height:394px;background:#f0f0f0"></div>
<div class="a" style="left:3775px;top:683px;width:55px;height:44px;background:#c9c9c9"></div>
<div class="a" style="left:3775px;top:1053px;width:55px;height:24px;background:#c9c9c9"></div>
<svg style="left:3788px;top:700px" width="28" height="16"><path d="M0 8 L13 1 V15 Z M13 8 L26 1 V15 Z" fill="#333"/></svg>
<div class="t" style="left:3816px;top:733px;font-size:24px;color:#505560;transform-origin:0 0;transform:rotate(90deg)">QUICK SETUP</div>
<!-- NAV BAR -->
<div class="a" style="left:1603px;top:1865px;width:633px;height:60px;background:#f0f0f0"></div>
<svg style="left:1603px;top:1865px" width="633" height="60">
<g fill="none" stroke="#333" stroke-width="2.2"><path d="M24 12 C14 14 12 46 24 50 M16 30 C6 30 6 26 12 24 M24 12 C34 14 40 20 44 24 C50 30 42 36 30 34"/></g><path d="M22 24 h2 v-3 h2 v3 h2 v2 h-2 v3 h-2 v-3 h-2z" fill="#2a7ae0"/><path d="M27 12 h2 v-3 h2 v3 h2 v2 h-2 v3 h-2 v-3 h-2z M37 20 h2 v-3 h2 v3 h2 v2 h-2 v3 h-2 v-3 h-2z" fill="#333"/>
<path d="M60 25 h14 l-7 8z" fill="#333"/>
<rect x="92" y="21" width="38" height="28" fill="#f6f6f6" stroke="#444" stroke-width="2.5"/><rect x="100" y="29" width="22" height="11" fill="#a9b0bb" stroke="#444" stroke-width="2"/><path d="M94 20 L102 10 L110 16 L120 10 L128 12 V20" fill="#777" stroke="#444" stroke-width="1.5"/>
<path d="M162 50 C150 40 156 34 160 40 L164 44 V16 C164 12 170 12 170 16 V30 V10 C170 6 176 6 176 10 V30 V8 C176 4 182 4 182 8 V30 V12 C182 8 188 8 188 12 V32 V24 C188 20 194 20 194 24 V38 C194 46 188 52 180 52 Z" fill="#f4f4f4" stroke="#333" stroke-width="2.2"/>
<circle cx="235" cy="30" r="12" fill="#e3eef3" stroke="#444" stroke-width="3"/><path d="M244 39 L254 49" stroke="#333" stroke-width="6"/><path d="M252 14 H262 M257 9 V19 M252 24 H262" stroke="#333" stroke-width="2.5"/>
<rect x="286" y="10" width="38" height="40" fill="none" stroke="#444" stroke-width="2" stroke-dasharray="4 3"/><circle cx="302" cy="26" r="15" fill="#e3eef3" stroke="#444" stroke-width="3"/><path d="M313 37 L324 49" stroke="#333" stroke-width="6"/>
<path d="M338 25 h14 l-7 8z" fill="#333"/>
<rect x="389" y="10" width="38" height="30" fill="#8fb1de" stroke="#444" stroke-width="3"/><path d="M403 41 V46 H396 V50 H420 V46 H413 V41" fill="#ddd" stroke="#444" stroke-width="2"/>
<path d="M433 25 h14 l-7 8z" fill="#333"/>
<rect x="466" y="10" width="38" height="40" fill="#888" stroke="#444" stroke-width="2.5"/><path d="M468 12 h34 v12 h-34z" fill="#fff"/><path d="M475 10 V50 M484 10 V50 M493 10 V50 M468 18 H502 M468 26 H502 M468 34 H502 M468 42 H502" stroke="#555" stroke-width="2"/>
<path d="M511 25 h14 l-7 8z" fill="#333"/>
<rect x="544" y="10" width="18" height="18" rx="2" fill="#a9c1e8" stroke="#3d5e9c" stroke-width="2.5"/><rect x="565" y="10" width="18" height="18" rx="2" fill="#a9c1e8" stroke="#3d5e9c" stroke-width="2.5"/><rect x="544" y="31" width="18" height="18" rx="2" fill="#a9c1e8" stroke="#3d5e9c" stroke-width="2.5"/><rect x="565" y="31" width="18" height="18" rx="2" fill="#a9c1e8" stroke="#3d5e9c" stroke-width="2.5"/>
<path d="M588 25 h14 l-7 8z" fill="#333"/>
</svg>
<!-- ruler numbers -->
<div class="t" style="left:233px;top:1412px;font-size:40px;color:#858585;transform-origin:0 0;transform:rotate(-90deg)">75</div>
<div class="t" style="left:703px;top:1412px;font-size:40px;color:#858585;transform-origin:0 0;transform:rotate(-90deg)">50</div>
<div class="t" style="left:1171px;top:1412px;font-size:40px;color:#858585;transform-origin:0 0;transform:rotate(-90deg)">25</div>
<!-- CONTEXT MENU -->
<div class="a" style="left:1502px;top:1076px;width:376px;height:485px;background:#fff;border:1px solid #ececec;border-radius:7px;box-shadow:1px 4px 5px rgba(0,0,0,0.2)"></div>
<div class="a" style="left:1505px;top:1170px;width:370px;height:3px;background:#e2e2e2"></div>
<div class="a" style="left:1505px;top:1220px;width:370px;height:42px;background:#0696d7"></div>
<div class="a" style="left:1505px;top:1266px;width:370px;height:3px;background:#e2e2e2"></div>
<div class="a" style="left:1505px;top:1407px;width:370px;height:3px;background:#e2e2e2"></div>
<div class="a" style="left:1505px;top:1463px;width:370px;height:3px;background:#e2e2e2"></div>
<div class="ct" id="c1" style="left:1569px;top:1087px">Create Selection Set</div>
<div class="ct" id="c2" style="left:1569px;top:1130px">Extrude</div>
<div class="ct" id="c3" style="left:1569px;top:1185px">Sketch Dimension</div>
<div class="ct" style="left:1855px;top:1185px;color:#aaa">d</div>
<div class="ct" id="c4" style="left:1569px;top:1228px;color:#fff">Normal/Construction</div>
<div class="ct" style="left:1856px;top:1228px;color:#9fd3ee">x</div>
<div class="ct" id="c5" style="left:1569px;top:1283px">Fix/UnFix</div>
<div class="ct" id="c6" style="left:1569px;top:1325px">Horizontal/Vertical</div>
<div class="ct" id="c7" style="left:1569px;top:1368px">Delete Coincident</div>
<div class="ct" id="c8" style="left:1569px;top:1423px">Copy</div>
<div class="ct" id="c8s" style="left:1796px;top:1423px;color:#aaa">Ctrl+C</div>
<div class="ct" id="c9" style="left:1569px;top:1478px">Find in Browser</div>
<div class="ct" id="c10" style="left:1569px;top:1520px">Find in Window</div>
<svg style="left:1510px;top:1078px" width="46" height="46"><path d="M4 36 V12 H32" fill="none" stroke="#3f8a2c" stroke-width="3"/><rect x="12" y="18" width="28" height="22" fill="#69a84f" stroke="#2f6e1e" stroke-width="2.5"/><g stroke="#f07d1a" stroke-width="2.5"><path d="M37 2 V16 M30 9 H44 M32 4 L42 14 M42 4 L32 14"/></g><circle cx="37" cy="9" r="3" fill="#fff"/></svg>
<svg style="left:1510px;top:1121px" width="46" height="44"><path d="M3 10 L9 3 H24 V36 L18 42 H3 Z" fill="#f2b78a" stroke="#444" stroke-width="2"/><path d="M18 10 L24 3 V36 L18 42 Z" fill="#d98a52"/><path d="M3 10 H18 V42" fill="none" stroke="#444" stroke-width="1.8"/><rect x="4" y="34" width="14" height="7" fill="#ccc"/><path d="M33 42 V6 M28 12 L33 3 L38 12" fill="none" stroke="#333" stroke-width="2.5"/></svg>
<svg style="left:1510px;top:1177px" width="44" height="42"><path d="M3 1 V41 M41 1 V41 M5 13 H39" stroke="#333" stroke-width="2.5"/><path d="M4 13 L11 8 V18 Z M40 13 L33 8 V18 Z" fill="#333"/></svg>
<svg style="left:1512px;top:1222px" width="44" height="40"><path d="M40 4 L4 20 L40 36" fill="none" stroke="#222" stroke-width="2.5"/><path d="M16 20 H44 M26 4 L32 12 M32 28 L26 36" stroke="#f39a2a" stroke-width="2.5" stroke-dasharray="4 3"/></svg>
<svg style="left:1514px;top:1277px" width="40" height="40"><path d="M10 16 V10 C10 2 30 2 30 10 V16" fill="none" stroke="#b5552e" stroke-width="4"/><rect x="3" y="16" width="34" height="22" rx="4" fill="#f0a37a" stroke="#b5552e" stroke-width="2.5"/><rect x="18" y="22" width="4" height="9" fill="#8a3a1a"/></svg>
<svg style="left:1514px;top:1318px" width="40" height="44"><path d="M20 2 V26 M26 2 V26" stroke="#333" stroke-width="2.5"/><path d="M6 30 H36" stroke="#333" stroke-width="3"/><path d="M4 4 l5 5 M4 12 l5 5 M4 20 l5 5" stroke="#d03020" stroke-width="2"/><path d="M6 36 l4 5 M14 36 l4 5 M22 36 l4 5 M30 36 l4 5" stroke="#d03020" stroke-width="2"/></svg>
<svg style="left:1513px;top:1360px" width="44" height="46"><circle cx="4" cy="5" r="3" fill="#e02020"/><path d="M5 10 V34 M1 28 L5 35 L9 28" fill="none" stroke="#333" stroke-width="2.2"/><path d="M4 42 H38" stroke="#333" stroke-width="2.5"/><circle cx="4" cy="42" r="3" fill="#e02020"/><path d="M16 12 L36 32 M36 12 L16 32" stroke="#d42a1e" stroke-width="6"/></svg>
<!-- SKETCH PALETTE -->
<div class="a" style="left:3120px;top:1080px;width:624px;height:990px;background:#f0f0f0;border:2px solid #cacaca"></div>
<div class="a" style="left:3123px;top:1140px;width:619px;height:2px;background:#cacaca"></div>
<svg style="left:3134px;top:1098px" width="24" height="24"><circle cx="12" cy="12" r="11.5" fill="#222"/><rect x="5" y="10" width="14" height="4" fill="#f0f0f0"/></svg>
<div class="pt" id="sp_h" style="left:3183px;top:1098px;font-size:25px;color:#6a6a6a">SKETCH PALETTE</div>
<div class="a" style="left:3133px;top:1173px;width:0;height:0;border-left:11px solid transparent;border-right:11px solid transparent;border-top:15px solid #333"></div>
<div class="pt" id="sp_opt" style="left:3166px;top:1168px;font-weight:bold;color:#3f3f3f;font-size:28px">Options</div>
<div class="pt" id="sp1" style="top:1242px">Construction</div>
<div class="pt" style="top:1317px">Look At</div>
<div class="pt" style="top:1392px">Sketch Grid</div>
<div class="pt" style="top:1468px">Snap</div>
<div class="pt" style="top:1542px">Slice</div>
<div class="pt" style="top:1617px">Show Profile</div>
<div class="pt" style="top:1692px">Show Points</div>
<div class="pt" id="sp8" style="top:1767px">Show Constraints</div>
<div class="pt" style="top:1842px">3D Sketch</div>
<div class="a" style="left:3133px;top:1921px;width:0;height:0;border-left:11px solid transparent;border-right:11px solid transparent;border-top:15px solid #333"></div>
<div class="pt" id="sp_con" style="left:3166px;top:1916px;font-weight:bold;color:#3f3f3f;font-size:28px">Constraints</div>
<div class="pt" style="top:1992px">Coincident</div>
<svg style="left:3414px;top:1236px" width="44" height="40"><path d="M40 6 L4 20 L40 34" fill="none" stroke="#333" stroke-width="2.2"/><path d="M14 20 H44 M28 2 L32 10 M32 30 L28 38" stroke="#f39a2a" stroke-width="2.5" stroke-dasharray="4 3"/></svg>
<svg style="left:3414px;top:1311px" width="42" height="42"><rect x="2" y="14" width="38" height="26" rx="2" fill="#f4f4f4" stroke="#555" stroke-width="2.5"/><rect x="9" y="22" width="24" height="10" fill="#a9b0bb" stroke="#555" stroke-width="2"/><path d="M4 14 L10 4 L18 10 L28 4 L36 8 V14" fill="#777" stroke="#555" stroke-width="1.5"/></svg>
<div class="cb" style="top:1388px"></div><svg style="left:3422px;top:1392px" width="26" height="26"><path d="M4 13 L10 21 L22 3" fill="none" stroke="#222" stroke-width="2.5"/></svg>
<div class="cb" style="top:1464px"></div><svg style="left:3422px;top:1468px" width="26" height="26"><path d="M4 13 L10 21 L22 3" fill="none" stroke="#222" stroke-width="2.5"/></svg>
<div class="cb" style="top:1538px"></div>
<div class="cb" style="top:1613px"></div><svg style="left:3422px;top:1617px" width="26" height="26"><path d="M4 13 L10 21 L22 3" fill="none" stroke="#222" stroke-width="2.5"/></svg>
<div class="cb" style="top:1688px"></div><svg style="left:3422px;top:1692px" width="26" height="26"><path d="M4 13 L10 21 L22 3" fill="none" stroke="#222" stroke-width="2.5"/></svg>
<div class="cb" style="top:1763px"></div><svg style="left:3422px;top:1767px" width="26" height="26"><path d="M4 13 L10 21 L22 3" fill="none" stroke="#222" stroke-width="2.5"/></svg>
<div class="cb" style="top:1838px"></div>
<svg style="left:3413px;top:1983px" width="44" height="44"><rect x="6" y="2" width="5" height="5" fill="#e02020"/><path d="M8.5 8 V32 M4.5 26 L8.5 33 L12.5 26" fill="none" stroke="#333" stroke-width="2"/><rect x="6" y="36" width="5" height="5" fill="#e02020"/><path d="M11 38.5 H42" stroke="#444" stroke-width="2.5"/></svg>
</body></html>
<!-- TASKBAR -->
<div class="a" style="left:0;top:2060px;width:3840px;height:100px;background:linear-gradient(to right,#080808 0,#080808 3100px,#2b2b2b 3260px,#2e2d2d 3720px,#1a1a1a 3790px,#050505 3826px,#303030 3830px,#303030 3840px)"></div>
<div class="a" style="left:1240px;top:2060px;width:121px;height:100px;background:#3b3b3b"></div>
<svg style="left:40px;top:2089px" width="42" height="42" fill="#fff"><path d="M0 6 L18 3.5 V20 H0 Z M20 3 L41 0 V20 H20 Z M0 22 H18 V38.5 L0 36 Z M20 22 H41 V42 L20 39 Z"/></svg>
<svg style="left:158px;top:2089px" width="44" height="44"><circle cx="27" cy="17" r="13.5" fill="none" stroke="#fff" stroke-width="2.5"/><path d="M17.5 26.5 L2 42" stroke="#fff" stroke-width="2.8"/></svg>
<svg style="left:281px;top:2086px" width="54" height="48"><path d="M1 6 H20 L24 10 H52 V46 H1 Z" fill="#e8b84a"/><rect x="1" y="14" width="52" height="33" fill="#fde28a"/><rect x="4" y="6" width="14" height="3" fill="#fff"/><path d="M10 47 V26 H44 V47 H36 V34 H18 V47 Z" fill="#3aa0e0"/></svg>
<svg style="left:403px;top:2081px" width="58" height="58"><circle cx="29" cy="31" r="26" fill="#f36b1c"/><path d="M29 6 C46 8 56 20 55 34 C52 50 40 57 28 57 C44 50 47 36 38 28 C34 22 26 20 20 24 C26 14 40 16 43 12 C38 6 34 6 29 6 Z" fill="#ffb400"/><circle cx="30" cy="31" r="15" fill="#3558b8"/><path d="M15 36 C20 46 34 48 42 40 C34 44 24 42 20 34 Z" fill="#f36b1c"/><path d="M44 2 C52 8 56 16 54 24 C50 18 46 14 40 12 Z" fill="#ffd24a"/></svg>
<svg style="left:527px;top:2082px" width="56" height="56"><circle cx="28" cy="28" r="27" fill="#db4437"/><path d="M28 28 L5 15 A27 27 0 0 0 16 52 Z" fill="#0f9d58"/><path d="M28 28 L16 52 A27 27 0 0 0 55 28 Z" fill="#f4c20d"/><path d="M28 28 L55 28 A27 27 0 0 0 28 1 L5 15 Z" fill="#db4437"/><circle cx="28" cy="28" r="12" fill="#fff"/><circle cx="28" cy="28" r="9.5" fill="#4285f4"/></svg>
<svg style="left:650px;top:2083px" width="56" height="56"><path d="M12 6 L48 4 L54 50 L18 54 Z" fill="#c9d7de"/><path d="M2 44 L20 2 L48 4 L30 48 Z" fill="#5fa8c4"/><path d="M8 42 L22 8 L40 9 L26 44 Z" fill="#a9d8ea"/><path d="M18 54 L30 48 L54 50 Z" fill="#8aa"/></svg>
<svg style="left:779px;top:2085px" width="50" height="50"><g transform="translate(25 25)" fill="#fff"><rect x="-5" y="-23" width="10" height="10" transform="rotate(0)"/><rect x="-5" y="-23" width="10" height="10" transform="rotate(45)"/><rect x="-5" y="-23" width="10" height="10" transform="rotate(90)"/><rect x="-5" y="-23" width="10" height="10" transform="rotate(135)"/><rect x="-5" y="-23" width="10" height="10" transform="rotate(180)"/><rect x="-5" y="-23" width="10" height="10" transform="rotate(225)"/><rect x="-5" y="-23" width="10" height="10" transform="rotate(270)"/><rect x="-5" y="-23" width="10" height="10" transform="rotate(315)"/><circle r="17"/><circle r="9.5" fill="#080808"/></g></svg>
<svg style="left:900px;top:2081px" width="56" height="58"><path d="M28 2 L54 10 V30 C54 44 42 54 28 58 C14 54 2 44 2 30 V10 Z" fill="#fff"/><path d="M28 7 L49 14 V30 C49 42 40 50 28 53 C16 50 7 42 7 30 V14 Z" fill="#1a7fa8"/><path d="M7 30 C7 42 16 50 28 53 C40 50 49 42 49 30 Z" fill="#5a9a4a"/><path d="M28 53 C38 50 46 42 49 32 L40 36 Z" fill="#d86a2a"/><path d="M10 42 L30 22 L46 16 L36 28 Z" fill="#fff"/></svg>
<svg style="left:1029px;top:2080px" width="46" height="62"><rect x="1" y="1" width="44" height="59" fill="#fff"/><rect x="5" y="5" width="36" height="11" fill="#080808"/><path d="M5 22 h8 l-8 8 z M19 22 h8 l-8 8 z M33 22 h8 l-8 8 z M5 34 h8 l-8 8 z M19 34 h8 l-8 8 z M33 34 h8 l-8 8 z M5 46 h8 l-8 8 z M19 46 h8 l-8 8 z M33 46 h8 l-8 8 z" fill="#080808"/></svg>
<svg style="left:1148px;top:2081px" width="66" height="66"><circle cx="28" cy="28" r="27" fill="#2ea6df"/><path d="M12 27 L44 14 L38 44 L28 36 L22 42 L22 33 Z" fill="#fff"/><path d="M22 33 L40 19 L28 36 Z" fill="#c8daea"/><circle cx="44" cy="44" r="18" fill="#e53935"/><text x="44" y="53" font-family="Liberation Sans" font-size="25" fill="#fff" text-anchor="middle">44</text></svg>
<div class="a" style="left:1270px;top:2080px;width:60px;height:60px;background:linear-gradient(135deg,#fde9d4,#f4c9a0)"></div>
<svg style="left:1270px;top:2080px" width="60" height="60"><path d="M20 8 H44 L40 18 H30 V26 H38 L35 34 H30 V52 H20 Z" fill="#e08a2a"/><path d="M30 8 H44 L40 18 H30 Z" fill="#f2a84a"/><text x="42" y="55" font-family="Liberation Sans" font-size="11" fill="#e08a2a" text-anchor="middle">360</text></svg>
<svg style="left:1393px;top:2080px" width="60" height="60"><circle cx="30" cy="30" r="29" fill="#1a8ad0"/><text x="29" y="44" font-family="Liberation Sans" font-style="italic" font-weight="bold" font-size="40" fill="#080808" text-anchor="middle" letter-spacing="-2">hp</text></svg>
<svg style="left:1519px;top:2081px" width="58" height="58"><rect x="1.5" y="1.5" width="55" height="55" fill="#001d26" stroke="#31c5f0" stroke-width="3"/><text x="28" y="40" font-family="Liberation Sans" font-weight="bold" font-size="29" fill="#31c5f0" text-anchor="middle">Ps</text></svg>
<svg style="left:1644px;top:2083px" width="60" height="58"><ellipse cx="28" cy="22" rx="25" ry="17" fill="#fff" stroke="#d04040" stroke-width="2"/><ellipse cx="24" cy="38" rx="22" ry="10" fill="#666" opacity="0.8"/><path d="M22 6 L30 38 M10 20 L40 34" stroke="#888" stroke-width="2"/><circle cx="40" cy="46" r="7" fill="none" stroke="#2a9ad8" stroke-width="4"/><circle cx="52" cy="40" r="7" fill="none" stroke="#2a9ad8" stroke-width="4"/></svg>
<div class="ul" style="left:258px"></div><div class="ul" style="left:382px"></div><div class="ul" style="left:336px;width:23px;background:#5aaec6"></div><div class="ul" style="left:460px;width:23px;background:#5aaec6"></div><div class="ul" style="left:506px"></div><div class="ul" style="left:630px"></div><div class="ul" style="left:754px"></div><div class="ul" style="left:878px"></div><div class="ul" style="left:1002px"></div><div class="ul" style="left:1126px"></div><div class="ul" style="left:1240px;width:121px"></div><div class="ul" style="left:1374px"></div><div class="ul" style="left:1498px"></div><div class="ul" style="left:1622px"></div>
<svg style="left:3308px;top:2090px" width="48" height="46"><circle cx="22" cy="22" r="21" fill="#fff"/><circle cx="22" cy="22" r="18" fill="#1a96dc"/><text x="22" y="33" font-family="Liberation Sans" font-weight="bold" font-size="30" fill="#fff" text-anchor="middle">?</text><circle cx="35" cy="34" r="10" fill="#1a96dc" stroke="#fff" stroke-width="2"/><rect x="33.5" y="31" width="3" height="9" fill="#fff"/><rect x="33.5" y="27" width="3" height="3" fill="#fff"/></svg>
<svg style="left:3386px;top:2099px" width="34" height="20"><path d="M2 18 L17 3 L32 18" fill="none" stroke="#fff" stroke-width="2.5"/></svg>
<div class="t" id="fra" style="left:3463px;top:2098px;font-size:26px;color:#fff">FRA</div>
<div class="t" id="time" style="left:3585px;top:2075px;font-size:28px;color:#fff">13:18</div>
<div class="t" id="date" style="left:3549px;top:2121px;font-size:28px;color:#fff">01.02.2019</div>
<svg style="left:3736px;top:2089px" width="42" height="42"><path d="M2 2 H39 V32 H25 L19 39 L14 32 H2 Z" fill="none" stroke="#fff" stroke-width="2.5"/></svg>
<div class="a" style="left:3827px;top:2060px;width:2px;height:100px;background:#777"></div>
